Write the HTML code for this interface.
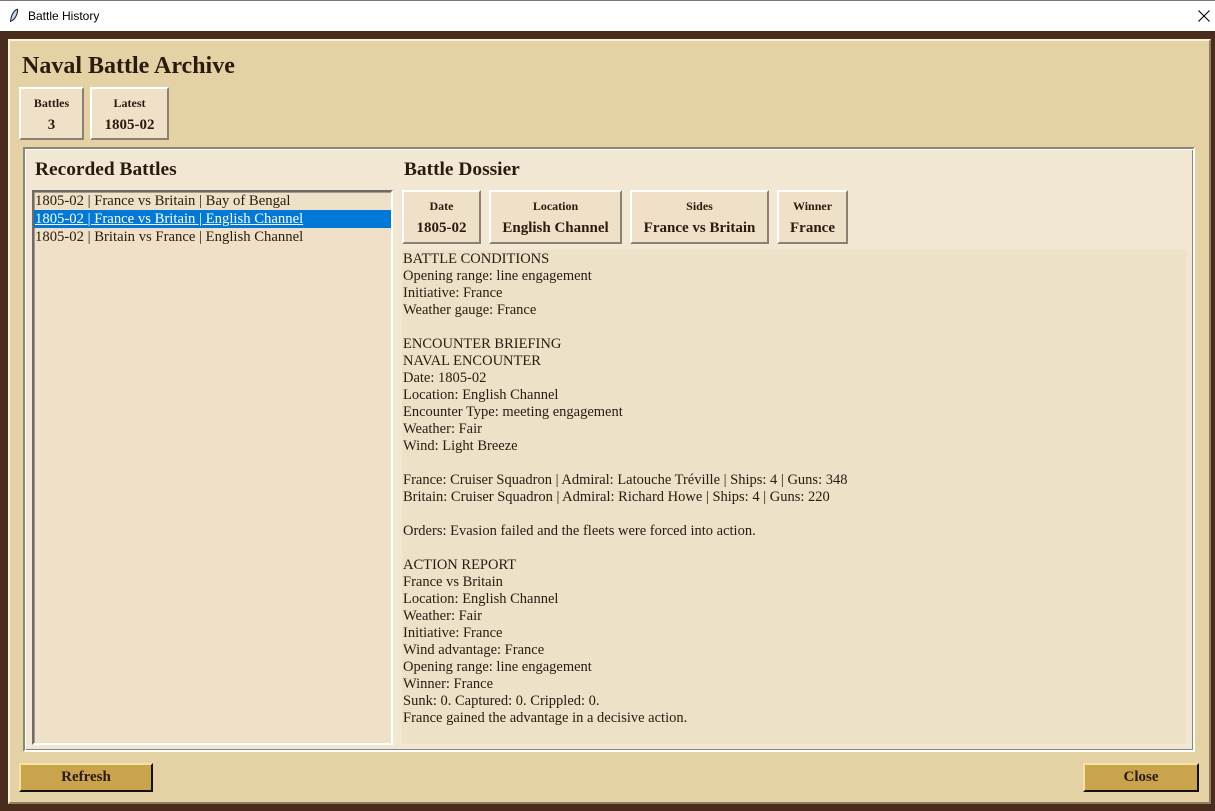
<!DOCTYPE html>
<html><head><meta charset="utf-8"><style>
*{box-sizing:border-box;margin:0;padding:0}
body{width:1215px;height:811px;position:relative;background:#4a2c1d;font-family:"Liberation Serif",serif;color:#2b1a0e;overflow:hidden}
.a{position:absolute}
.tb{left:0;top:0;width:1215px;height:31px;background:#fff;border-top:1px solid #777;font-family:"Liberation Sans",sans-serif;font-size:12px;color:#000}
.outer{left:8px;top:39px;width:1203px;height:765px;background:#e4d1a4;border:2px solid;border-color:#fbf3dc #8c7f62 #8c7f62 #fbf3dc}
.card{background:#eee1c8;border:2px solid;border-color:#fff #8a8170 #8a8170 #fff;text-align:center;font-weight:bold}
.card .l{font-size:12px;margin-top:7px}
.card .v{font-size:15px;margin-top:6px}
.inner{left:23px;top:147px;width:1172px;height:605px;background:#f2e7d2;border:2px solid;border-color:#8c8676 #fff #fff #8c8676;box-shadow:inset 1px 1px 0 #fff, inset -1px -1px 0 #8c8676}
.h2{font-size:19.4px;font-weight:bold}
.list{left:32px;top:190px;width:361px;height:555px;background:#eee1c8;border:2px solid;border-color:#6e6a64 #fff #fff #6e6a64;box-shadow:inset 1px 1px 0 #a09a90;font-size:14.7px;line-height:18px}
.list div{padding-left:1px;height:18px;white-space:nowrap}
.sel{background:#0078d7;color:#fff;text-decoration:underline}
.txt{left:402px;top:250px;width:784px;height:494px;background:#ede1c8;font-size:14.5px;line-height:17px;padding:1px 0 0 1px;white-space:pre}
.btn{background:#c9a44c;border:2px solid;border-color:#f4e1a6 #111 #111 #f4e1a6;font-weight:bold;font-size:15px;text-align:center;line-height:25px}
</style></head><body>
<div class="a tb"><svg class="a" style="left:9px;top:7px" width="10" height="16" viewBox="0 0 10 16"><path d="M8.5 1 C4 3 2 8 1.5 14 M8.5 1 C9 6 6 11 2.5 13" fill="#bfd3ee" stroke="#223" stroke-width="1.1"/></svg><span class="a" style="left:28px;top:8px">Battle History</span><svg class="a" style="left:1198px;top:9px" width="12" height="12" viewBox="0 0 12 12"><path d="M0.5 0.5L11.5 11.5M11.5 0.5L0.5 11.5" stroke="#000" stroke-width="1.1"/></svg></div>
<div class="a outer"></div>
<div class="a" style="left:22px;top:53px;font-size:24px;font-weight:bold">Naval Battle Archive</div>
<div class="a card" style="left:19px;top:87px;width:65px;height:53px"><div class="l">Battles</div><div class="v">3</div></div>
<div class="a card" style="left:90px;top:87px;width:79px;height:53px"><div class="l">Latest</div><div class="v">1805-02</div></div>
<div class="a inner"></div>
<div class="a h2" style="left:35px;top:159px">Recorded Battles</div>
<div class="a h2" style="left:404px;top:159px">Battle Dossier</div>
<div class="a list"><div>1805-02 | France vs Britain | Bay of Bengal</div><div class="sel">1805-02 | France vs Britain | English Channel</div><div>1805-02 | Britain vs France | English Channel</div></div>
<div class="a card" style="left:402px;top:190px;width:79px;height:54px"><div class="l">Date</div><div class="v">1805-02</div></div>
<div class="a card" style="left:489px;top:190px;width:133px;height:54px"><div class="l">Location</div><div class="v">English Channel</div></div>
<div class="a card" style="left:630px;top:190px;width:139px;height:54px"><div class="l">Sides</div><div class="v">France vs Britain</div></div>
<div class="a card" style="left:777px;top:190px;width:71px;height:54px"><div class="l">Winner</div><div class="v">France</div></div>
<div class="a txt">BATTLE CONDITIONS
Opening range: line engagement
Initiative: France
Weather gauge: France

ENCOUNTER BRIEFING
NAVAL ENCOUNTER
Date: 1805-02
Location: English Channel
Encounter Type: meeting engagement
Weather: Fair
Wind: Light Breeze

France: Cruiser Squadron | Admiral: Latouche Tréville | Ships: 4 | Guns: 348
Britain: Cruiser Squadron | Admiral: Richard Howe | Ships: 4 | Guns: 220

Orders: Evasion failed and the fleets were forced into action.

ACTION REPORT
France vs Britain
Location: English Channel
Weather: Fair
Initiative: France
Wind advantage: France
Opening range: line engagement
Winner: France
Sunk: 0. Captured: 0. Crippled: 0.
France gained the advantage in a decisive action.</div>
<div class="a btn" style="left:19px;top:763px;width:134px;height:29px">Refresh</div>
<div class="a btn" style="left:1083px;top:763px;width:116px;height:29px">Close</div>
</body></html>
